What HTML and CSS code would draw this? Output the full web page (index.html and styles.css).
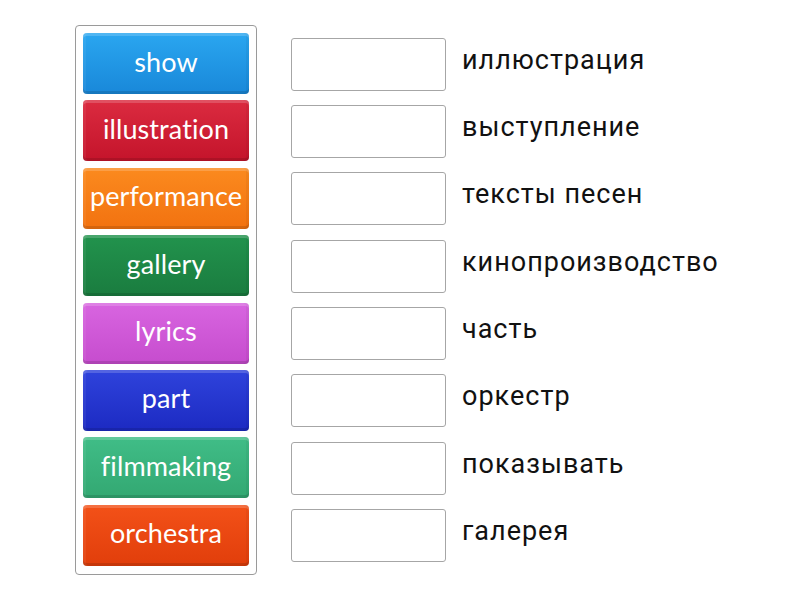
FILE: index.html
```html
<!DOCTYPE html>
<html>
<head>
<meta charset="utf-8">
<link rel="stylesheet" href="styles.css">
</head>
<body>
<div class="page">
  <div class="bank">
    <div class="tile blue">show</div>
    <div class="tile red">illustration</div>
    <div class="tile orange">performance</div>
    <div class="tile green">gallery</div>
    <div class="tile purple">lyrics</div>
    <div class="tile navy">part</div>
    <div class="tile teal">filmmaking</div>
    <div class="tile redorange">orchestra</div>
  </div>
  <div class="targets">
    <div class="row"><div class="slot"></div><div class="word">иллюстрация</div></div>
    <div class="row"><div class="slot"></div><div class="word">выступление</div></div>
    <div class="row"><div class="slot"></div><div class="word">тексты песен</div></div>
    <div class="row"><div class="slot"></div><div class="word">кинопроизводство</div></div>
    <div class="row"><div class="slot"></div><div class="word">часть</div></div>
    <div class="row"><div class="slot"></div><div class="word">оркестр</div></div>
    <div class="row"><div class="slot"></div><div class="word">показывать</div></div>
    <div class="row"><div class="slot"></div><div class="word">галерея</div></div>
  </div>
</div>
</body>
</html>
```
FILE: styles.css
```css
html, body {
  margin: 0;
  padding: 0;
  background: #ffffff;
}
.page {
  width: 800px;
  height: 600px;
  display: flex;
  align-items: flex-start;
  padding: 25px 0 0 75px;
  box-sizing: border-box;
}
.bank {
  width: 182px;
  height: 550px;
  box-sizing: border-box;
  border: 1px solid #9a9a9a;
  border-radius: 4px;
  padding: 7px 7px 0 7px;
  display: flex;
  flex-direction: column;
  gap: 6.4px;
}
.tile {
  height: 61px;
  box-sizing: border-box;
  padding-bottom: 5px;
  border-radius: 4px;
  color: #ffffff;
  font-family: "Lato", "Open Sans", sans-serif;
  font-size: 27px;
  display: flex;
  align-items: center;
  justify-content: center;
  box-shadow: inset 0 3px 0 rgba(255,255,255,0.18), inset 0 -3px 0 rgba(0,0,0,0.12), inset 3px 0 0 rgba(255,255,255,0.06), inset -3px 0 0 rgba(0,0,0,0.04);
  letter-spacing: 0.1px;
}
.blue { background: linear-gradient(#2aa6f0, #1988d9); }
.red { background: linear-gradient(#db2b40, #c4142b); }
.orange { background: linear-gradient(#fb8a1e, #f27210); }
.green { background: linear-gradient(#22934d, #1a7c3f); }
.purple { background: linear-gradient(#d865e0, #c64cce); }
.navy { background: linear-gradient(#2f43dc, #1c2ac2); }
.teal { background: linear-gradient(#40bd87, #33a872); }
.redorange { background: linear-gradient(#f35118, #e13e0b); }
.targets {
  margin-left: 34px;
  padding-top: 13px;
  display: flex;
  flex-direction: column;
  gap: 15.4px;
}
.row {
  display: flex;
  align-items: center;
  height: 52px;
}
.slot {
  width: 153px;
  height: 51px;
  border: 1px solid #a6a6a6;
  border-radius: 3px;
  box-sizing: content-box;
}
.word {
  margin-left: 16px;
  margin-top: -9px;
  font-family: "Roboto", "Liberation Sans", sans-serif;
  font-size: 27px;
  letter-spacing: 1px;
  color: #111111;
}
```
